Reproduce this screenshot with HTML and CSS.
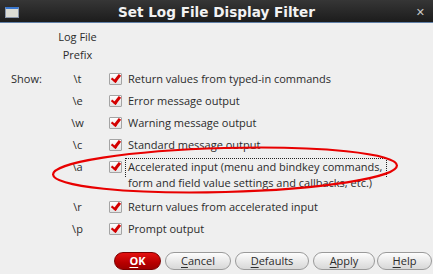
FILE: index.html
```html
<!DOCTYPE html>
<html>
<head>
<meta charset="utf-8">
<link rel="stylesheet" href="styles.css">
</head>
<body>
<div class="window">
  <div class="titlebar">
    <span class="winicon"></span>
    <span class="title">Set Log File Display Filter</span>
    <span class="close">✕</span>
  </div>
  <div class="content">
    <div class="header">
      <div class="hprefix">Log File<br>Prefix</div>
    </div>
    <div class="rows">
      <div class="row"><span class="show">Show:</span><span class="prefix">\t</span><span class="cb"></span><span class="label">Return values from typed-in commands</span></div>
      <div class="row"><span class="show"></span><span class="prefix">\e</span><span class="cb"></span><span class="label">Error message output</span></div>
      <div class="row"><span class="show"></span><span class="prefix">\w</span><span class="cb"></span><span class="label">Warning message output</span></div>
      <div class="row"><span class="show"></span><span class="prefix">\c</span><span class="cb"></span><span class="label">Standard message output</span></div>
      <div class="row row-tall"><span class="show"></span><span class="prefix">\a</span><span class="cb"></span><span class="label focus">Accelerated input (menu and bindkey commands,<br>form and field value settings and callbacks, etc.)</span></div>
      <div class="row"><span class="show"></span><span class="prefix">\r</span><span class="cb"></span><span class="label">Return values from accelerated input</span></div>
      <div class="row"><span class="show"></span><span class="prefix">\p</span><span class="cb"></span><span class="label">Prompt output</span></div>
    </div>
    <div class="buttons">
      <span class="btn btn-ok"><u>O</u>K</span>
      <span class="btn btn-cancel"><u>C</u>ancel</span>
      <span class="btn btn-defaults"><u>D</u>efaults</span>
      <span class="btn btn-apply"><u>A</u>pply</span>
      <span class="btn btn-help"><u>H</u>elp</span>
    </div>
  </div>
  <svg class="annot" width="433" height="274" viewBox="0 0 433 274">
    <ellipse cx="225" cy="170" rx="172" ry="22" transform="rotate(-1.5 225 170)" fill="none" stroke="#e80000" stroke-width="2.2"/>
  </svg>
</div>
</body>
</html>
```
FILE: styles.css
```css
html, body {
  margin: 0;
  padding: 0;
}
body {
  width: 433px;
  height: 274px;
  overflow: hidden;
  background: #efefef;
  font-family: "Open Sans", "DejaVu Sans", sans-serif;
  font-size: 11px;
  color: #2b2b2b;
}
.window {
  position: relative;
  width: 433px;
  height: 274px;
}
.titlebar {
  height: 22px;
  background: linear-gradient(#363636, #1c1c1c);
  border-bottom: 1px solid #6080a8;
  display: flex;
  align-items: center;
  position: relative;
}
.winicon {
  position: absolute;
  left: 5px;
  top: 7px;
  width: 12px;
  height: 8px;
  background: #dcdcd4;
  border: 1px solid #8a96aa;
  border-top: 2px solid #3a78d0;
}
.title {
  flex: 1;
  text-align: center;
  color: #f2f2f2;
  font-family: "DejaVu Sans", sans-serif;
  font-weight: bold;
  font-size: 13.6px;
  padding-top: 1px;
}
.close {
  position: absolute;
  right: 8px;
  top: 4px;
  color: #c8c8c8;
  font-size: 11px;
  font-weight: bold;
}
.content {
  padding: 5px 0 0 0;
}
.header {
  padding-left: 58px;
  height: 40px;
}
.hprefix {
  width: 39px;
  text-align: center;
  line-height: 18px;
}
.rows {
  padding-left: 11px;
}
.row {
  display: flex;
  align-items: flex-start;
  height: 22px;
  line-height: 16px;
  padding-top: 3px;
  box-sizing: border-box;
}
.row-tall {
  height: 40px;
}
.show {
  width: 47px;
}
.prefix {
  width: 39px;
  text-align: center;
}
.cb {
  width: 11px;
  height: 10px;
  margin: 2px 6px 0 12px;
  border: 1px solid #a4a4a4;
  border-radius: 1px;
  background: linear-gradient(#ffffff, #e2e2e2);
  position: relative;
  flex: none;
}
.cb::after {
  content: "";
  position: absolute;
  left: 3px;
  top: -1px;
  width: 3px;
  height: 7px;
  border-right: 3px solid #d40000;
  border-bottom: 2.5px solid #d40000;
  transform: rotate(38deg);
}
.label {
  white-space: nowrap;
}
.focus {
  position: relative;
}
.focus::before {
  content: "";
  position: absolute;
  left: -3px;
  top: -1px;
  width: 260px;
  height: 18px;
  border: 1px dotted #222;
  border-bottom: none;
}
.buttons {
  display: flex;
  justify-content: flex-end;
  gap: 4px;
  padding: 12px 1px 0 0;
}
.btn {
  height: 16px;
  line-height: 16px;
  text-align: center;
  border: 1px solid #9a9a9a;
  border-radius: 9px;
  background: linear-gradient(#fdfdfd, #e6e6e6 60%, #d8d8d8);
  color: #2b2b2b;
  box-sizing: content-box;
}
.btn u {
  text-decoration-thickness: 1px;
  text-underline-offset: 2px;
}
.btn-ok {
  width: 45px;
  background: linear-gradient(#e41010, #b80000 60%, #9c0000);
  border-color: #7a0000;
  color: #fff;
  font-weight: bold;
}
.btn-cancel { width: 64px; }
.btn-defaults { width: 72px; }
.btn-apply { width: 60px; }
.btn-help { width: 53px; margin-left: -2px; }
.annot {
  position: absolute;
  left: 0;
  top: 0;
  pointer-events: none;
}
```
